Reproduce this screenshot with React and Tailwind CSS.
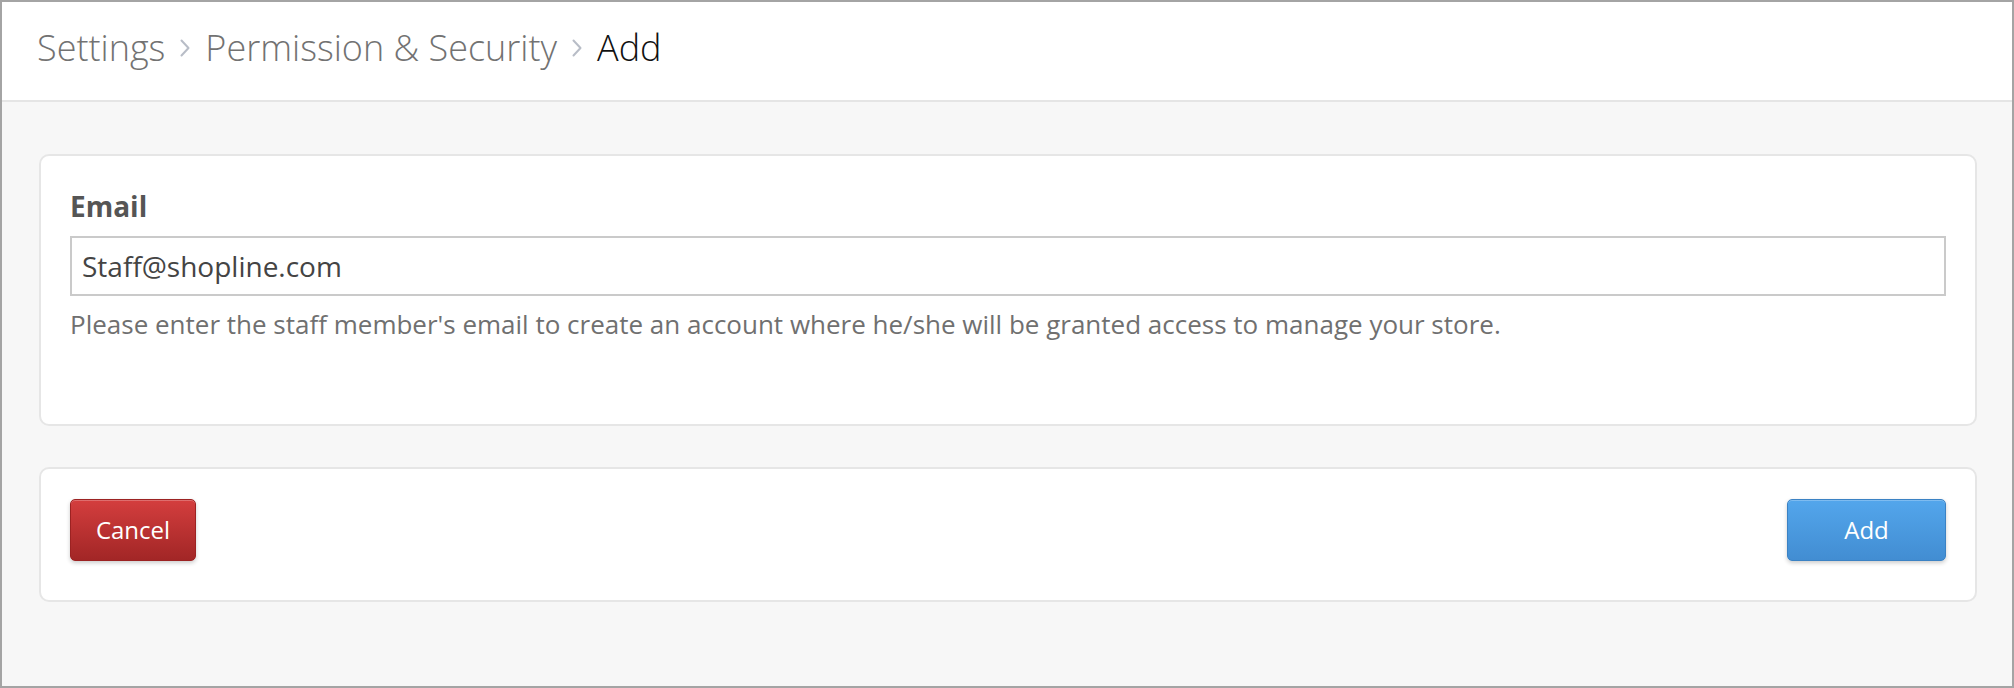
import React from 'react'

const Chevron = () => (
  <svg width="12" height="20" viewBox="0 0 12 20" fill="none" className="mx-[14px] shrink-0">
    <path d="M2.5 2.5L9.5 10L2.5 17.5" stroke="#b8bdc7" strokeWidth="2" strokeLinecap="round" strokeLinejoin="round" />
  </svg>
)

const App = () => {
  return (
    <div className="w-full h-[688px] border-2 border-[#a4a4a4] bg-[#f7f7f7] font-['Open_Sans',sans-serif] overflow-hidden">
      {/* Breadcrumb header */}
      <div className="h-[100px] bg-white border-b-2 border-[#e5e5e5] flex items-center pl-[35px] pb-[7px]">
        <span className="text-[36px] leading-[36px] font-light text-[#727272]">Settings</span>
        <Chevron />
        <span className="text-[36px] leading-[36px] font-light text-[#727272]">Permission &amp; Security</span>
        <Chevron />
        <span className="text-[36px] leading-[36px] font-light text-[#111]">Add</span>
      </div>

      <div className="pl-[37px] pr-[35px] pt-[52px]">
        {/* Email form */}
        <div className="bg-white border-2 border-[#e6e6e6] rounded-[10px] pt-[31px] px-[29px] pb-[82px]">
          <label className="block text-[28px] leading-[38px] font-bold text-[#555]">Email</label>
          <input
            type="text"
            defaultValue="Staff@shopline.com"
            className="mt-[11px] block w-full h-[60px] border-2 border-[#cacaca] px-[10px] text-[28px] text-[#444] bg-white outline-none"
          />
          <p className="mt-[11px] text-[26px] leading-[35px] text-[#707070]">
            Please enter the staff member's email to create an account where he/she will be granted access to manage your store.
          </p>
        </div>

        {/* Actions */}
        <div className="mt-[41px] bg-white border-2 border-[#e6e6e6] rounded-[10px] pt-[30px] px-[29px] pb-[39px] flex justify-between">
          <button className="w-[126px] h-[62px] rounded-[5px] border border-[#9c2222] bg-linear-to-b from-[#d43e3e] to-[#a22626] text-white text-[24px] flex items-center justify-center shadow-[inset_0_1px_0_rgba(255,255,255,0.25),0_2px_4px_rgba(0,0,0,0.2)]">
            Cancel
          </button>
          <button className="w-[159px] h-[62px] rounded-[5px] border border-[#3b82c4] bg-linear-to-b from-[#53a6ec] to-[#428dd2] text-white text-[24px] flex items-center justify-center shadow-[inset_0_1px_0_rgba(255,255,255,0.25),0_2px_4px_rgba(0,0,0,0.2)]">
            Add
          </button>
        </div>
      </div>
    </div>
  )
}

export default App
